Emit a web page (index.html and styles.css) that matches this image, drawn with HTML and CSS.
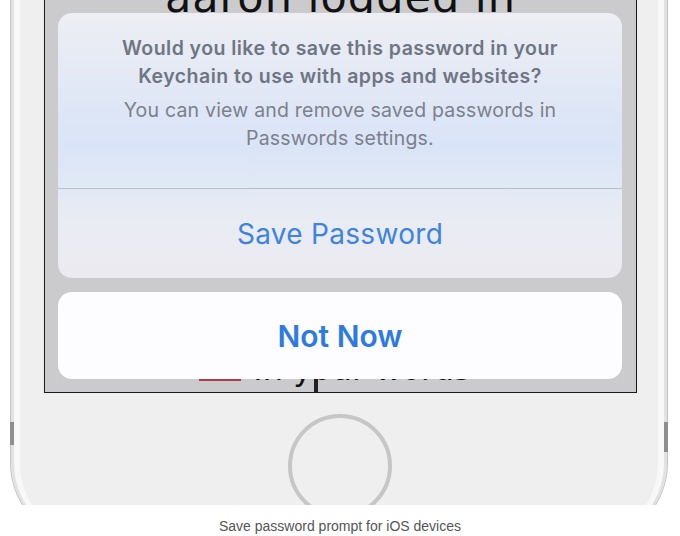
FILE: index.html
```html
<!DOCTYPE html>
<html lang="en">
<head>
<meta charset="utf-8">
<title>Save password prompt</title>
<link rel="stylesheet" href="styles.css">
</head>
<body>
<figure class="figure">
  <div class="stage">
    <div class="phone">
      <span class="side-btn side-left"></span>
      <span class="side-btn side-right"></span>
      <div class="screen">
        <div class="backdrop">
          <div class="headline">aaron logged in</div>
          <div class="under-row">
            <span class="red-mark"></span>
            <span class="under-text">In your words</span>
          </div>
          <span class="cursor-bar"></span>
        </div>
        <div class="sheet">
          <div class="alert-card">
            <div class="alert-body">
              <p class="alert-title">Would you like to save this password in your Keychain to use with apps and websites?</p>
              <p class="alert-msg">You can view and remove saved passwords in Passwords settings.</p>
            </div>
            <div class="alert-action">Save Password</div>
          </div>
          <div class="cancel-card">Not Now</div>
        </div>
      </div>
      <div class="home-btn"></div>
    </div>
  </div>
  <figcaption class="caption">Save password prompt for iOS devices</figcaption>
</figure>
</body>
</html>
```
FILE: styles.css
```css
html, body {
  margin: 0;
  padding: 0;
  background: #ffffff;
}
body {
  width: 680px;
  height: 536px;
  overflow: hidden;
  font-family: Inter, "Noto Sans", "Liberation Sans", sans-serif;
}
.figure {
  margin: 0;
}
.stage {
  height: 505px;
  overflow: hidden;
  position: relative;
}
.phone {
  position: relative;
  margin-left: 10px;
  width: 658px;
  height: 543px;
  box-sizing: border-box;
  background: #efefef;
  border-radius: 0 0 80px 80px;
  border: 1px solid #c4c4c4;
  border-top: none;
  box-shadow: inset 3px 0 0 #e2e2e2, inset 9px 0 0 #f8f8f8, inset -3px 0 0 #e2e2e2, inset -9px 0 0 #f8f8f8, inset 0 -9px 0 #f8f8f8;
  display: flex;
  flex-direction: column;
  align-items: flex-start;
}
.side-btn {
  position: absolute;
  width: 4px;
  background: #8e8e8e;
}
.side-left {
  left: -1px;
  top: 422px;
  height: 23px;
}
.side-right {
  right: -1px;
  top: 422px;
  height: 30px;
}
.screen {
  position: relative;
  margin-left: 33px;
  width: 593px;
  height: 393px;
  box-sizing: border-box;
  border: 1px solid #1a1a1a;
  border-top: none;
  background: #cbcbcd;
  overflow: hidden;
}
.backdrop {
  height: 100%;
  display: flex;
  flex-direction: column;
  justify-content: space-between;
  align-items: center;
}
.headline {
  font-family: "DejaVu Sans", sans-serif;
  font-size: 43px;
  line-height: 50px;
  color: #111;
  margin-top: -28px;
  letter-spacing: 1px;
}
.under-row {
  display: flex;
  align-items: flex-start;
  gap: 12px;
  height: 34px;
  margin-bottom: 6px;
  margin-left: -11px;
}
.red-mark {
  width: 42px;
  height: 3px;
  margin-top: 26px;
  background: #b23a4a;
}
.under-text {
  font-family: "DejaVu Sans", sans-serif;
  font-size: 32px;
  line-height: 34px;
  color: #111;
}
.cursor-bar {
  position: absolute;
  left: 269px;
  bottom: 0;
  width: 4px;
  height: 14px;
  background: #222;
}
.sheet {
  position: absolute;
  left: 13px;
  right: 14px;
  top: 13px;
  display: flex;
  flex-direction: column;
  gap: 14px;
}
.alert-card {
  height: 265px;
  border-radius: 14px;
  background: linear-gradient(180deg, #edeef3 0%, #e3e9f5 25%, #d9e4f6 50%, #e2e9f5 66%, #eaecf3 80%, #eceaf1 100%);
  display: flex;
  flex-direction: column;
  overflow: hidden;
}
.alert-body {
  padding: 21px 10px 0;
  height: 176px;
  box-sizing: border-box;
  border-bottom: 1px solid #b9bdc7;
  text-align: center;
}
.alert-title {
  margin: 0 auto;
  width: 500px;
  font-size: 19.5px;
  line-height: 28px;
  font-weight: 600;
  letter-spacing: 0.45px;
  color: #6f7583;
}
.alert-msg {
  margin: 6px auto 0;
  width: 500px;
  font-size: 19.5px;
  line-height: 28px;
  font-weight: 400;
  letter-spacing: 0.2px;
  color: #7b808c;
}
.alert-action {
  flex: 1;
  display: flex;
  align-items: center;
  justify-content: center;
  font-size: 28px;
  letter-spacing: 0.3px;
  color: #3c84dd;
}
.cancel-card {
  height: 87px;
  border-radius: 14px;
  background: #fdfcfe;
  display: flex;
  align-items: center;
  justify-content: center;
  font-size: 30px;
  font-weight: 600;
  color: #2d7be0;
}
.home-btn {
  margin-top: 21px;
  margin-left: 277px;
  width: 104px;
  height: 104px;
  box-sizing: border-box;
  border-radius: 50%;
  border: 4px solid #c6c6c6;
  background: #efefef;
}
.caption {
  margin-top: 11px;
  text-align: center;
  font-family: "Liberation Sans", sans-serif;
  font-size: 14px;
  line-height: 20px;
  color: #555555;
}
```
